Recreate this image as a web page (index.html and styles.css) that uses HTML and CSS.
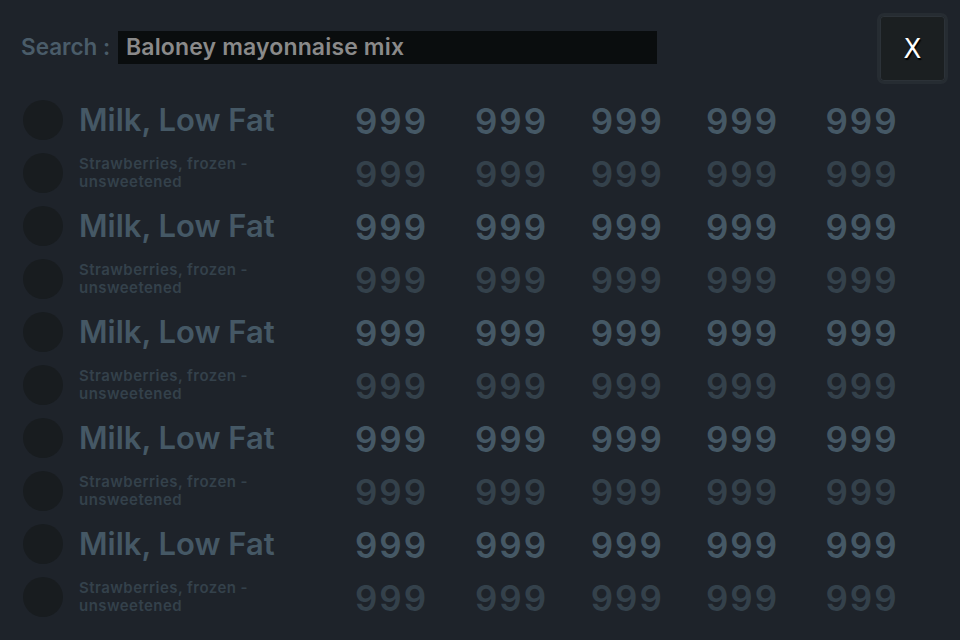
FILE: index.html
```html
<!DOCTYPE html>
<html>
<head>
<meta charset="utf-8">
<link rel="stylesheet" href="styles.css">
</head>
<body>
<div class="top">
  <span class="label">Search :</span>
  <div class="input">Baloney mayonnaise mix</div>
  <div class="close">X</div>
</div>
<div class="list">
  <div class="row main"><div class="dot"></div><div class="name">Milk, Low Fat</div><div class="n">999</div><div class="n">999</div><div class="n">999</div><div class="n">999</div><div class="n">999</div></div>
  <div class="row sub"><div class="dot"></div><div class="name">Strawberries, frozen -<br>unsweetened</div><div class="n">999</div><div class="n">999</div><div class="n">999</div><div class="n">999</div><div class="n">999</div></div>
  <div class="row main"><div class="dot"></div><div class="name">Milk, Low Fat</div><div class="n">999</div><div class="n">999</div><div class="n">999</div><div class="n">999</div><div class="n">999</div></div>
  <div class="row sub"><div class="dot"></div><div class="name">Strawberries, frozen -<br>unsweetened</div><div class="n">999</div><div class="n">999</div><div class="n">999</div><div class="n">999</div><div class="n">999</div></div>
  <div class="row main"><div class="dot"></div><div class="name">Milk, Low Fat</div><div class="n">999</div><div class="n">999</div><div class="n">999</div><div class="n">999</div><div class="n">999</div></div>
  <div class="row sub"><div class="dot"></div><div class="name">Strawberries, frozen -<br>unsweetened</div><div class="n">999</div><div class="n">999</div><div class="n">999</div><div class="n">999</div><div class="n">999</div></div>
  <div class="row main"><div class="dot"></div><div class="name">Milk, Low Fat</div><div class="n">999</div><div class="n">999</div><div class="n">999</div><div class="n">999</div><div class="n">999</div></div>
  <div class="row sub"><div class="dot"></div><div class="name">Strawberries, frozen -<br>unsweetened</div><div class="n">999</div><div class="n">999</div><div class="n">999</div><div class="n">999</div><div class="n">999</div></div>
  <div class="row main"><div class="dot"></div><div class="name">Milk, Low Fat</div><div class="n">999</div><div class="n">999</div><div class="n">999</div><div class="n">999</div><div class="n">999</div></div>
  <div class="row sub"><div class="dot"></div><div class="name">Strawberries, frozen -<br>unsweetened</div><div class="n">999</div><div class="n">999</div><div class="n">999</div><div class="n">999</div><div class="n">999</div></div>
</div>
</body>
</html>
```
FILE: styles.css
```css
html, body {
  margin: 0;
  padding: 0;
  background: #1e232a;
  width: 960px;
  height: 640px;
  overflow: hidden;
  font-family: Inter, "Liberation Sans", sans-serif;
  font-weight: 600;
}
.top {
  display: flex;
  align-items: center;
  height: 71px;
  padding: 13px 12px 0 21px;
}
.label {
  color: #4a5c69;
  font-size: 22.5px;
  font-weight: 600;
  letter-spacing: 0;
  width: 97px;
  margin-top: -4px;
}
.input {
  width: 531px;
  height: 33px;
  background: #0a0d0e;
  color: #8a8a8a;
  font-size: 23px;
  line-height: 33px;
  padding-left: 8px;
  letter-spacing: 0.15px;
  margin-top: -3px;
}
.close {
  margin-left: auto;
  width: 71px;
  height: 71px;
  box-sizing: border-box;
  border: 3px solid #262c32;
  box-shadow: inset 0 0 0 1px #2c3238;
  border-radius: 7px;
  background: #1b1f21;
  color: #fff;
  font-family: "DejaVu Sans", sans-serif;
  font-size: 26px;
  font-weight: 400;
  display: flex;
  align-items: center;
  justify-content: center;
  text-shadow: 1px 2px 1px #000;
}
.list {
  margin-top: 9px;
  padding-left: 23px;
}
.row {
  display: grid;
  grid-template-columns: 40px 267.5px 122px 118px 113.5px 117px 122px;
  align-items: center;
  height: 53px;
}
.dot {
  width: 40px;
  height: 40px;
  border-radius: 50%;
  background: #181c1f;
}
.name {
  padding-left: 16px;
  white-space: nowrap;
}
.main .name {
  font-size: 31px;
  color: #455865;
}
.sub .name {
  font-size: 15px;
  letter-spacing: 0.45px;
  line-height: 18px;
  color: #34414b;
}
.n {
  text-align: center;
  font-size: 35px;
  letter-spacing: 2px;
  padding-top: 2px;
}
.main .n { color: #455865; }
.sub .n { color: #34414b; }
```
